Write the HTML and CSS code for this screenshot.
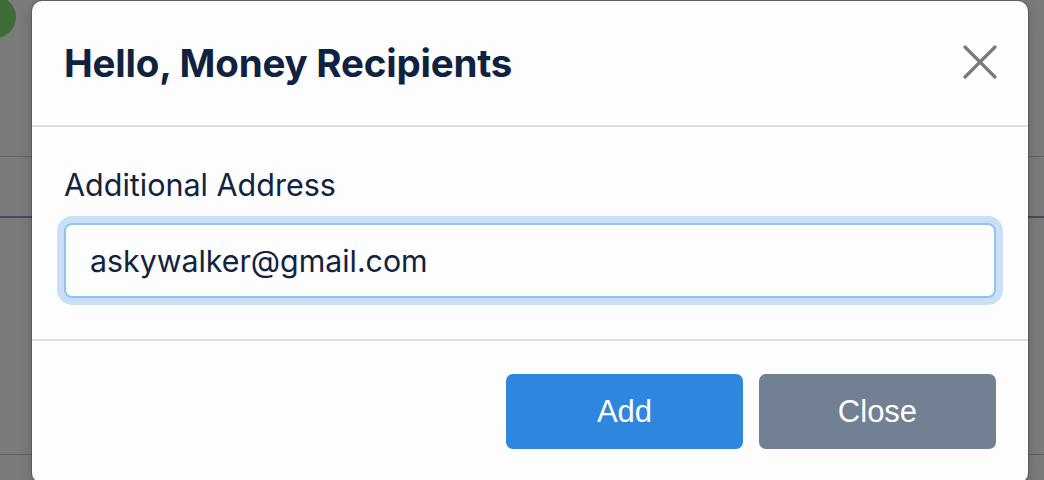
FILE: index.html
```html
<!DOCTYPE html>
<html lang="en">
<head>
    <meta charset="UTF-8">
    <meta name="viewport" content="width=device-width, initial-scale=1.0">
    <title>Money Recipients</title>
    <link rel="stylesheet" href="styles.css">
</head>
<body>
    <div class="page">
        <div class="avatar"></div>
        <div class="row row-top"></div>
        <div class="row row-head"></div>
        <div class="row row-body"></div>
    </div>

    <div class="overlay">
        <div class="modal">
            <div class="modal-header">
                <h2 class="modal-title">Hello, Money Recipients</h2>
                <button class="close-x" aria-label="Close">
                    <svg width="34" height="34" viewBox="0 0 34 34">
                        <path d="M2 2 L32 32 M32 2 L2 32" stroke="#7a7a7a" stroke-width="3.2" stroke-linecap="round"/>
                    </svg>
                </button>
            </div>
            <div class="modal-body">
                <label class="label" for="address">Additional Address</label>
                <input class="input" id="address" type="text" value="askywalker@gmail.com">
            </div>
            <div class="modal-footer">
                <button class="btn btn-add">Add</button>
                <button class="btn btn-close">Close</button>
            </div>
        </div>
    </div>
</body>
</html>
```

FILE: styles.css
```css
body, html {
    margin: 0;
    padding: 0;
    width: 100%;
    height: 100%;
    overflow: hidden;
    font-family: Inter, "Noto Sans", sans-serif;
}
body {
    background: #7b7b7b;
}
.page {
    height: 100%;
    position: relative;
}
.avatar {
    position: absolute;
    left: -26px;
    top: -4px;
    width: 42px;
    height: 42px;
    border-radius: 50%;
    background: #3e6c36;
}
.row {
    border-bottom: 1px solid #636363;
}
.row-top {
    height: 156px;
}
.row-head {
    height: 59px;
    border-bottom: 2px solid #4b4b55;
}
.row-body {
    height: 236px;
}
.overlay {
    position: absolute;
    top: 0;
    left: 0;
    right: 0;
    bottom: 0;
}
.modal {
    position: absolute;
    left: 32px;
    top: 1px;
    width: 996px;
    height: 482px;
    background: #fdfdfd;
    border-radius: 10px;
    box-shadow: 0 0 0 1px rgba(0, 0, 0, 0.18), 0 4px 14px rgba(0, 0, 0, 0.2);
    display: flex;
    flex-direction: column;
}
.modal-header {
    height: 124px;
    padding: 0 31px 0 32px;
    display: flex;
    align-items: center;
    justify-content: space-between;
    border-bottom: 2px solid #dfdfe3;
}
.modal-title {
    margin: 0;
    font-size: 38.5px;
    font-weight: 700;
    color: #0f2240;
    letter-spacing: -0.2px;
}
.close-x {
    border: none;
    background: none;
    padding: 0;
    width: 34px;
    height: 34px;
    margin-top: -2px;
    cursor: pointer;
}
.modal-body {
    height: 212px;
    padding: 0 32px;
    display: flex;
    flex-direction: column;
    border-bottom: 2px solid #dfdfe3;
}
.label {
    margin-top: 38px;
    font-size: 30.5px;
    line-height: 40px;
    color: #10233f;
}
.input {
    margin-top: 18px;
    height: 75px;
    box-sizing: border-box;
    border: 2px solid #93c2f0;
    border-radius: 8px;
    box-shadow: 0 0 0 7px #cbe0f6;
    padding: 0 24px;
    font-family: Inter, "Noto Sans", sans-serif;
    font-size: 30.3px;
    color: #10233f;
    background: #fdfdfd;
    outline: none;
}
.modal-footer {
    padding: 33px 32px 0;
    display: flex;
    justify-content: flex-end;
    gap: 16px;
}
.btn {
    width: 237px;
    height: 75px;
    border: none;
    border-radius: 7px;
    color: #ffffff;
    font-family: "Liberation Sans", Arial, sans-serif;
    font-size: 31px;
    cursor: pointer;
}
.btn-add {
    background: #2f86dd;
}
.btn-close {
    background: #718092;
}
```
